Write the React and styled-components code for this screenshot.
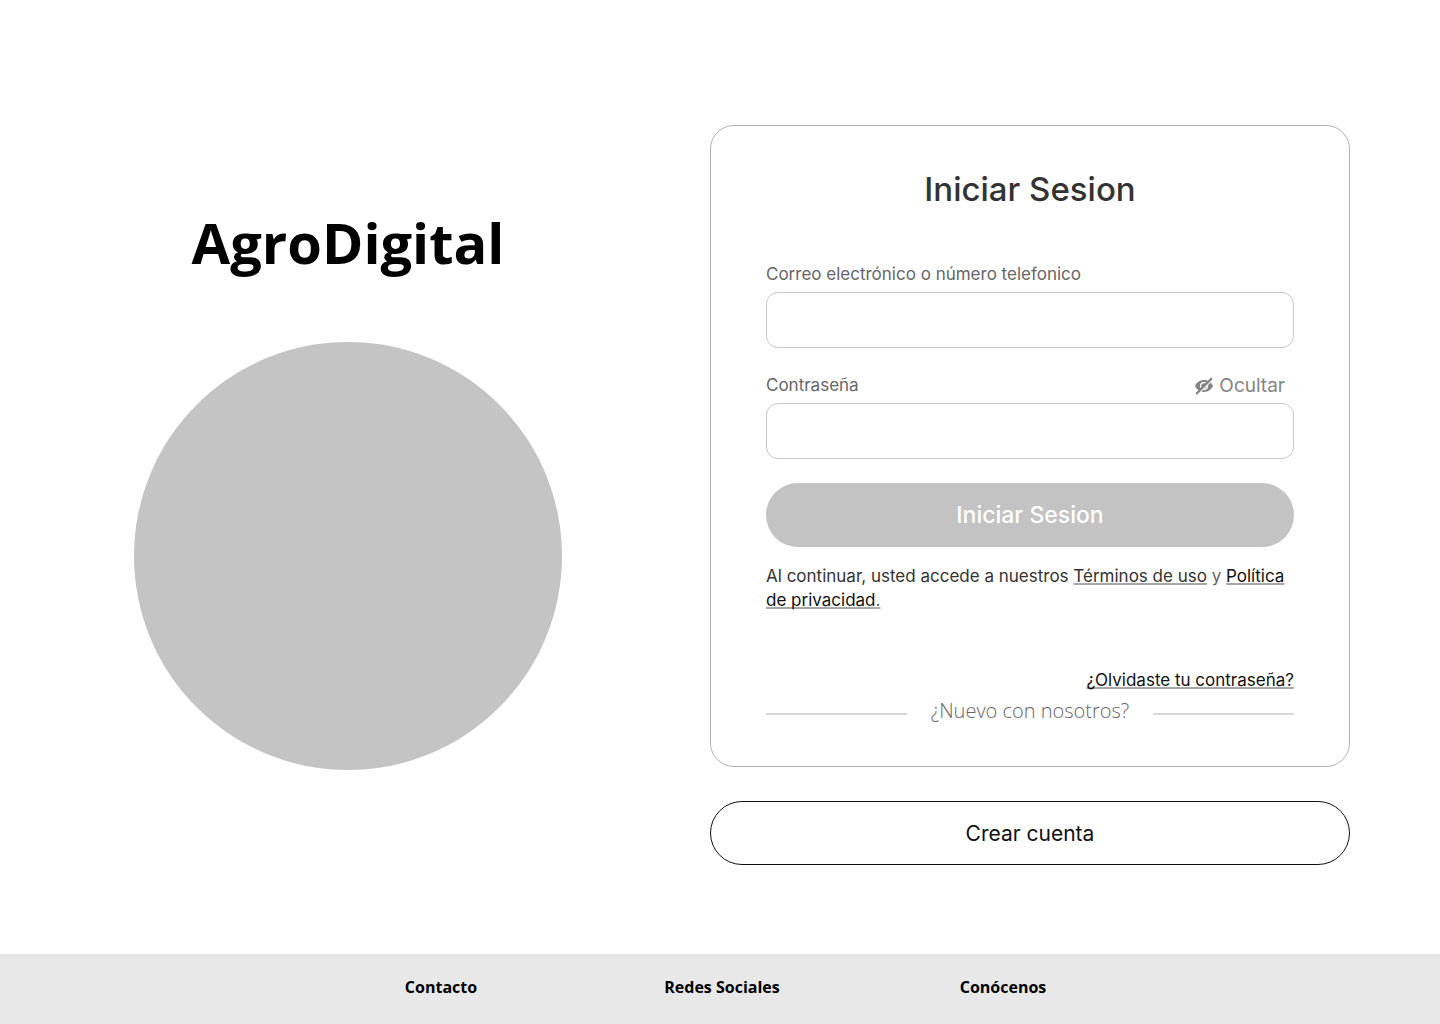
import React, { useState } from 'react';
import styled, { createGlobalStyle } from 'styled-components';

const ui = 'Inter, "Liberation Sans", sans-serif';
const humanist = '"Open Sans", "Noto Sans", sans-serif';

const GlobalStyle = createGlobalStyle`
  *, *::before, *::after { box-sizing: border-box; }
  body { margin: 0; background: #fff; font-family: ${ui}; }
`;

const Page = styled.div`
  min-height: 100vh;
  display: flex;
  flex-direction: column;
`;

const Main = styled.main`
  flex: 1;
  display: grid;
  grid-template-columns: minmax(0, 516fr) minmax(0, 640fr);
  column-gap: 104px;
  align-items: start;
  padding: 125px 90px 64px;
`;

const Brand = styled.section`
  display: flex;
  flex-direction: column;
  align-items: center;
  gap: 60px;
  padding-top: 77px;
`;

const BrandName = styled.h1`
  margin: 0;
  font: 700 56px/80px ${humanist};
  color: #000;
`;

const BrandDisc = styled.div`
  width: 83%;
  aspect-ratio: 1;
  border-radius: 50%;
  background: #c4c4c4;
`;

const Access = styled.section`
  display: flex;
  flex-direction: column;
  gap: 34px;
`;

const Card = styled.form`
  display: flex;
  flex-direction: column;
  padding: 39px 55px 40px;
  border: 1px solid #b2b2b2;
  border-radius: 24px;
`;

const Title = styled.h2`
  margin: 0 0 48px;
  text-align: center;
  font-size: 33px;
  font-weight: 500;
  line-height: 48px;
  color: #333;
`;

const Field = styled.div`
  display: flex;
  flex-direction: column;
  gap: 4px;
  margin-bottom: 24px;
`;

const FieldHead = styled.div`
  display: flex;
  align-items: center;
  justify-content: space-between;
  padding-right: 9px;
`;

const Label = styled.label`
  font-size: 17px;
  line-height: 27px;
  color: #666;
`;

const Input = styled.input`
  width: 100%;
  height: 56px;
  padding: 0 16px;
  border: 1px solid #c8c8c8;
  border-radius: 12px;
  background: #fff;
  font: 400 17px ${ui};
  color: #333;
`;

const Toggle = styled.button`
  display: flex;
  align-items: center;
  gap: 5px;
  padding: 0;
  border: 0;
  background: none;
  font: 400 19px/27px ${ui};
  color: #858585;
  cursor: pointer;
`;

const Submit = styled.button`
  height: 64px;
  border: 0;
  border-radius: 32px;
  background: #c3c3c3;
  font: 500 23px ${ui};
  color: #fff;
  cursor: pointer;
`;

const Terms = styled.p`
  margin: 17px 0 56px;
  font-size: 17px;
  line-height: 24px;
  color: #333;
`;

const Soft = styled.span`
  color: #666;
`;

const Link = styled.a`
  color: ${(p) => (p.$muted ? '#333' : '#111')};
  text-decoration: underline 2px #a8a8a8;
  text-underline-offset: 1px;
  text-decoration-skip-ink: none;
`;

const Forgot = styled(Link)`
  align-self: flex-end;
  font-size: 17px;
  line-height: 24px;
`;

const Divider = styled.div`
  display: flex;
  align-items: center;
  gap: 24px;
  margin-top: 4px;
  font: 300 20px/30px ${humanist};
  color: #666;

  &::before,
  &::after {
    content: '';
    flex: 1;
    height: 2px;
    margin-top: 6px;
    background: #d8d8d8;
  }
`;

const Create = styled.button`
  height: 64px;
  border: 1px solid #111;
  border-radius: 32px;
  background: #fff;
  font: 400 21px ${ui};
  color: #111;
  cursor: pointer;
`;

const Footer = styled.footer`
  background: #e8e8e8;
`;

const FooterNav = styled.nav`
  display: grid;
  grid-template-columns: repeat(3, minmax(0, 281px));
  justify-content: center;
  justify-items: center;
  padding: 19px 0 23px 4px;
`;

const FooterLink = styled.a`
  font: 700 16px/28px ${humanist};
  color: #000;
  text-decoration: none;
`;

function EyeSlash() {
  return (
    <svg width="20" height="20" viewBox="0 0 20 20" aria-hidden="true">
      <path
        fill="currentColor"
        fillRule="evenodd"
        d="M10 4.1C5.6 4.1 2.5 6.700 1 10c1.500 3.300 4.600 5.900 9 5.900s7.500-2.600 9-5.900C17.500 6.700 14.400 4.100 10 4.100ZM10 5.900a4.100 4.100 0 1 1 0 8.200 4.100 4.100 0 0 1 0-8.200ZM10 7.300a2.700 2.700 0 1 0 0 5.400 2.700 2.700 0 0 0 0-5.400Z"
      />
      <path d="M3.600 18.500 19.200 2.900" stroke="#fff" strokeWidth="1.600" />
      <path d="M2.800 17.400 17.300 2.900" stroke="currentColor" strokeWidth="2.200" strokeLinecap="round" />
    </svg>
  );
}

export default function App() {
  const [hidden, setHidden] = useState(true);

  return (
    <>
      <GlobalStyle />
      <Page>
        <Main>
          <Brand>
            <BrandName>AgroDigital</BrandName>
            <BrandDisc />
          </Brand>
          <Access>
            <Card onSubmit={(e) => e.preventDefault()}>
              <Title>Iniciar Sesion</Title>
              <Field>
                <FieldHead>
                  <Label htmlFor="user">Correo electrónico o número telefonico</Label>
                </FieldHead>
                <Input id="user" type="text" autoComplete="username" />
              </Field>
              <Field>
                <FieldHead>
                  <Label htmlFor="password">Contraseña</Label>
                  <Toggle type="button" onClick={() => setHidden(!hidden)}>
                    <EyeSlash />
                    Ocultar
                  </Toggle>
                </FieldHead>
                <Input
                  id="password"
                  type={hidden ? 'password' : 'text'}
                  autoComplete="current-password"
                />
              </Field>
              <Submit type="submit">Iniciar Sesion</Submit>
              <Terms>
                Al continuar, usted accede a nuestros{' '}
                <Link href="#terminos" $muted>Términos de uso</Link> <Soft>y</Soft>{' '}
                <Link href="#privacidad">Política de privacidad<Soft>.</Soft></Link>
              </Terms>
              <Forgot href="#recuperar">¿Olvidaste tu contraseña?</Forgot>
              <Divider>¿Nuevo con nosotros?</Divider>
            </Card>
            <Create type="button">Crear cuenta</Create>
          </Access>
        </Main>
        <Footer>
          <FooterNav>
            <FooterLink href="#contacto">Contacto</FooterLink>
            <FooterLink href="#redes">Redes Sociales</FooterLink>
            <FooterLink href="#conocenos">Conócenos</FooterLink>
          </FooterNav>
        </Footer>
      </Page>
    </>
  );
}
